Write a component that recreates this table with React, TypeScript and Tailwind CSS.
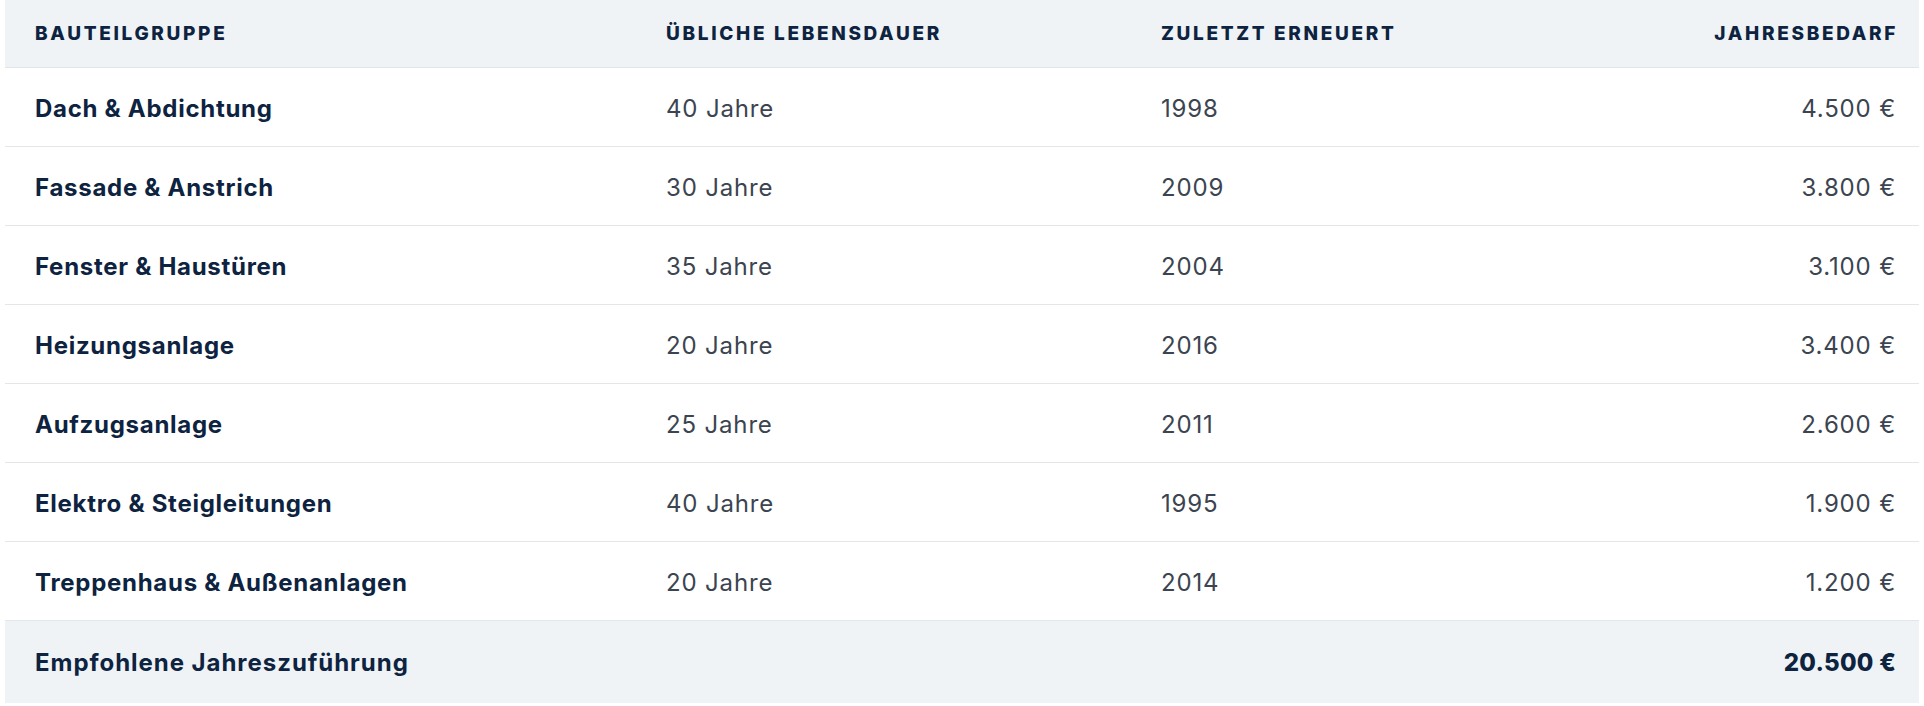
const rows = [
  { name: "Dach & Abdichtung", life: "40 Jahre", last: "1998", cost: "4.500 €" },
  { name: "Fassade & Anstrich", life: "30 Jahre", last: "2009", cost: "3.800 €" },
  { name: "Fenster & Haustüren", life: "35 Jahre", last: "2004", cost: "3.100 €" },
  { name: "Heizungsanlage", life: "20 Jahre", last: "2016", cost: "3.400 €" },
  { name: "Aufzugsanlage", life: "25 Jahre", last: "2011", cost: "2.600 €" },
  { name: "Elektro & Steigleitungen", life: "40 Jahre", last: "1995", cost: "1.900 €" },
  { name: "Treppenhaus & Außenanlagen", life: "20 Jahre", last: "2014", cost: "1.200 €" },
];

const grid = "grid grid-cols-[631px_495px_400px_1fr] items-center";

export default function App() {
  return (
    <div className="min-h-screen bg-white px-[5px] font-['Inter',sans-serif]">
      <div className="w-full">
        {/* head */}
        <div className={`${grid} h-[68px] border-b border-[#e1e5ea] bg-[#eff3f6] pt-[2px] text-[19px] font-extrabold uppercase tracking-[0.14em] text-[#0d2340]`}>
          <div className="pl-[30px]">Bauteilgruppe</div>
          <div className="pl-[30px]">Übliche Lebensdauer</div>
          <div className="pl-[30px]">Zuletzt erneuert</div>
          <div className="pr-[21px] text-right">Jahresbedarf</div>
        </div>

        {rows.map((r) => (
          <div
            key={r.name}
            className={`${grid} h-[79px] border-b border-[#e4e6ea] pt-[3px] text-[24px]`}
          >
            <div className="pl-[30px] font-bold tracking-[0.03em] text-[#0d2340]">{r.name}</div>
            <div className="pl-[30px] tracking-[0.035em] text-[#3b4450]">{r.life}</div>
            <div className="pl-[30px] tracking-[0.035em] text-[#3b4450]">{r.last}</div>
            <div className="pr-[23px] text-right tracking-[0.035em] text-[#3b4450]">{r.cost}</div>
          </div>
        ))}

        {/* total */}
        <div className={`${grid} h-[82px] bg-[#eff3f6] pt-[2px] text-[24px] font-bold text-[#0d2340]`}>
          <div className="pl-[30px] tracking-[0.04em]">Empfohlene Jahreszuführung</div>
          <div />
          <div />
          <div className="pr-[23px] text-right font-extrabold tracking-[0.01em]">20.500 €</div>
        </div>
      </div>
    </div>
  );
}
